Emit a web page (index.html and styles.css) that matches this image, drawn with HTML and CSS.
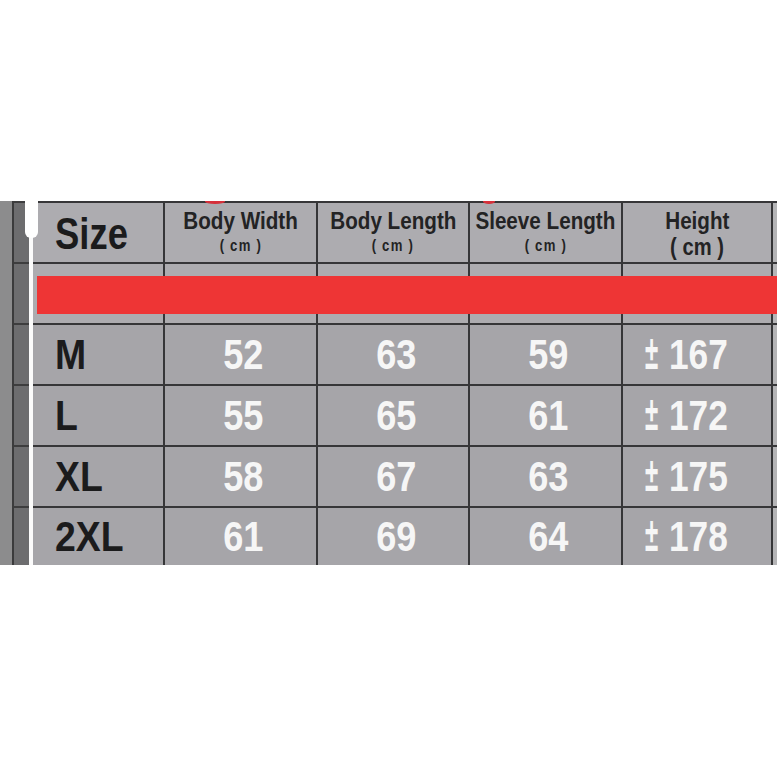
FILE: index.html
```html
<!DOCTYPE html>
<html lang="en">
<head>
<meta charset="utf-8">
<title>Size chart</title>
<link rel="stylesheet" href="styles.css">
</head>
<body>
<div class="sheet">
  <div class="gutter">
    <div class="g-light"></div>
    <div class="g-line"></div>
    <div class="g-strip">
      <div></div><div></div><div></div><div></div><div></div><div></div>
    </div>
    <div class="g-white"></div>
    <span class="g-cap"></span>
  </div>
  <div class="chart">
    <div class="c h sz"><span class="size-title">Size</span></div>
    <div class="c h"><span class="ht-t">Body Width</span><span class="ht-u">( cm )</span></div>
    <div class="c h"><span class="ht-t">Body Length</span><span class="ht-u">( cm )</span></div>
    <div class="c h"><span class="ht-t">Sleeve Length</span><span class="ht-u">( cm )</span></div>
    <div class="c h"><span class="ht-t">Height</span><span class="ht-u big">( cm )</span></div>
    <div class="c stub"></div>

    <div class="c blank"></div>
    <div class="c blank"></div>
    <div class="c blank"></div>
    <div class="c blank"></div>
    <div class="c blank"></div>
    <div class="c stub"></div>

    <div class="c sz"><span class="lbl">M</span></div>
    <div class="c num"><span class="v">52</span></div>
    <div class="c num"><span class="v">63</span></div>
    <div class="c num"><span class="v">59</span></div>
    <div class="c num hgt"><span class="pm">±</span><span class="v">167</span></div>
    <div class="c stub"></div>

    <div class="c sz"><span class="lbl">L</span></div>
    <div class="c num"><span class="v">55</span></div>
    <div class="c num"><span class="v">65</span></div>
    <div class="c num"><span class="v">61</span></div>
    <div class="c num hgt"><span class="pm">±</span><span class="v">172</span></div>
    <div class="c stub"></div>

    <div class="c sz"><span class="lbl">XL</span></div>
    <div class="c num"><span class="v">58</span></div>
    <div class="c num"><span class="v">67</span></div>
    <div class="c num"><span class="v">63</span></div>
    <div class="c num hgt"><span class="pm">±</span><span class="v">175</span></div>
    <div class="c stub"></div>

    <div class="c sz"><span class="lbl">2XL</span></div>
    <div class="c num"><span class="v">61</span></div>
    <div class="c num"><span class="v">69</span></div>
    <div class="c num"><span class="v">64</span></div>
    <div class="c num hgt"><span class="pm">±</span><span class="v">178</span></div>
    <div class="c stub"></div>
  </div>
  <div class="band"></div>
  <span class="smudge s1"></span>
  <span class="smudge s2"></span>
</div>
</body>
</html>
```

FILE: styles.css
```css
html, body {
  margin: 0;
  padding: 0;
  background: #ffffff;
}

body {
  font-family: "Liberation Sans", Arial, sans-serif;
  font-weight: bold;
}

.sheet {
  position: relative;
  margin-top: 201px;
  width: 777px;
  height: 364px;
  display: flex;
  overflow: hidden;
}

.gutter {
  position: relative;
  display: flex;
  width: 33px;
  flex: none;
}

.g-light {
  width: 12px;
  background: #8c8c8d;
}

.g-line {
  width: 2px;
  background: #3b3b3c;
}

.g-strip {
  width: 15px;
  display: grid;
  grid-template-rows: 59px 59px 59px 59px 59px 57px;
  row-gap: 2px;
  padding-top: 2px;
  background: #3d3d3e;
}

.g-strip div {
  background: #6d6d6f;
}

.g-white {
  width: 4px;
  background: #fbfbfb;
}

.g-cap {
  position: absolute;
  left: 25px;
  top: 0;
  width: 13px;
  height: 37px;
  background: #ffffff;
  border-radius: 0 0 6px 6px;
  z-index: 2;
}

.chart {
  flex: none;
  display: grid;
  grid-template-columns: 130px 151px 150px 151px 148px 4px;
  grid-template-rows: 59px 59px 59px 59px 59px 57px;
  gap: 2px;
  padding-top: 2px;
  background: #363638;
}

.c {
  background: #a6a5a9;
  display: flex;
  align-items: center;
  justify-content: center;
  color: #f6f6f6;
  white-space: nowrap;
}

.h {
  background: #adacb0;
  flex-direction: column;
  justify-content: flex-start;
  color: #232324;
  padding-top: 6px;
}

.blank {
  background: #adacb0;
}

.stub {
  background: #b5b5b7;
}

.sz {
  justify-content: flex-start;
  align-items: center;
  padding-left: 22px;
  color: #1b1b1c;
}

.h.sz {
  flex-direction: row;
  padding-top: 2px;
}

.size-title {
  display: inline-block;
  font-size: 45px;
  line-height: 1;
  transform: scaleX(0.81);
  transform-origin: left center;
}

.lbl {
  display: inline-block;
  font-size: 43px;
  transform: scaleX(0.87);
  transform-origin: left center;
}

.ht-t {
  display: block;
  font-size: 24px;
  line-height: 24px;
  transform: scaleX(0.86);
}

.ht-u {
  display: block;
  margin-top: 4px;
  font-size: 16px;
  line-height: 18px;
  letter-spacing: 1.5px;
  transform: scaleX(0.82);
}

.ht-u.big {
  margin-top: 2px;
  font-size: 24px;
  line-height: 24px;
  letter-spacing: 0;
  transform: scaleX(0.84);
}

.num {
  padding-left: 6px;
}

.v {
  display: inline-block;
  font-size: 42px;
  transform: scaleX(0.86);
}

.hgt {
  justify-content: flex-start;
  padding-left: 22px;
}

.hgt .v {
  transform: scaleX(0.84);
  transform-origin: left center;
}

.pm {
  display: inline-block;
  font-size: 48px;
  line-height: 42px;
  margin-right: -2px;
  transform: scaleX(0.5) translateY(-2px);
  transform-origin: left center;
}

.band {
  position: absolute;
  left: 37px;
  right: 0;
  top: 75px;
  height: 38px;
  background: #ee3535;
  z-index: 1;
}

.smudge {
  position: absolute;
  top: -2px;
  height: 5px;
  background: #d6303a;
  border-radius: 0 0 50% 50%;
  z-index: 1;
}

.s1 {
  left: 205px;
  width: 20px;
}

.s2 {
  left: 483px;
  width: 12px;
}
```
